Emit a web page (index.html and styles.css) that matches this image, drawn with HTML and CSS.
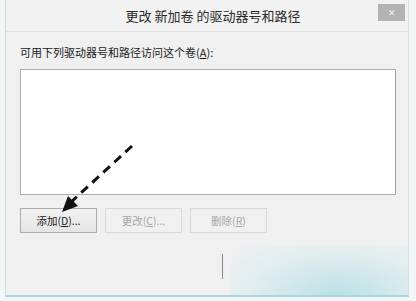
FILE: index.html
```html
<!DOCTYPE html>
<html lang="zh">
<head>
<meta charset="utf-8">
<link rel="stylesheet" href="styles.css">
</head>
<body>
<div class="window">
  <div class="titlebar">
    <div class="title">更改 新加卷 的驱动器号和路径</div>
    <div class="close">✕</div>
  </div>
  <div class="content">
    <div class="label">可用下列驱动器号和路径访问这个卷(<u>A</u>):</div>
    <div class="listbox"></div>
    <div class="buttons">
      <div class="btn">添加(<u>D</u>)...</div>
      <div class="btn disabled">更改(<u>C</u>)...</div>
      <div class="btn disabled">删除(<u>R</u>)</div>
    </div>
    <div class="lower">
      <div class="vline"></div>
    </div>
  </div>
  <svg class="arrow" width="90" height="90" viewBox="0 0 90 90">
    <line x1="76" y1="14" x2="14" y2="71" stroke="#111" stroke-width="3" stroke-dasharray="9 6"/>
    <polygon points="6,80 12,64 22,74" fill="#111"/>
  </svg>
  <div class="glow"></div>
</div>
</body>
</html>
```

FILE: styles.css
```css
html, body {
  margin: 0;
  padding: 0;
  width: 416px;
  height: 301px;
  overflow: hidden;
  background: #f3f6f6;
  font-family: "Noto Sans CJK SC", "Liberation Sans", sans-serif;
}
.window {
  position: relative;
  box-sizing: border-box;
  margin-left: 5px;
  width: 404px;
  height: 297px;
  background: #f0f0f0;
  border-left: 1px solid #cfdcdc;
  border-right: 1px solid #d6dede;
  border-bottom: 2px solid #a7d6de;
  display: flex;
  flex-direction: column;
}
.titlebar {
  height: 31px;
  background: #f2f2f2;
  border-bottom: 1px solid #dedede;
  display: flex;
  align-items: center;
  justify-content: center;
  position: relative;
}
.title {
  font-size: 13px;
  color: #2a2a2a;
  margin-left: 12px;
}
.close {
  position: absolute;
  right: 3px;
  top: 4px;
  width: 27px;
  height: 17px;
  background: #b3b3b3;
  color: #f4f4f4;
  font-size: 9px;
  display: flex;
  align-items: center;
  justify-content: center;
}
.content {
  flex: 1;
  padding: 11px 8px 0 14px;
  display: flex;
  flex-direction: column;
}
.label {
  font-size: 11px;
  color: #1a1a1a;
  height: 18px;
  line-height: 18px;
}
.label u, .btn u { text-decoration-thickness: 1px; }
.listbox {
  margin-top: 8px;
  width: 374px;
  height: 124px;
  background: #fff;
  border: 1px solid #adadad;
  border-right-color: #a0a0a0;
}
.buttons {
  margin-top: 13px;
  display: flex;
  gap: 8px;
}
.btn {
  box-sizing: border-box;
  width: 77px;
  height: 25px;
  border: 1px solid #acacac;
  background: linear-gradient(#f2f2f2, #e5e5e5);
  font-size: 10.5px;
  color: #222;
  display: flex;
  align-items: center;
  justify-content: center;
}
.btn.disabled {
  border-color: #d9d9d9;
  background: #f0f0f0;
  color: #a6a6a6;
}
.lower {
  flex: 1;
  position: relative;
}
.vline {
  margin-left: 202px;
  margin-top: 21px;
  width: 1px;
  height: 25px;
  background: #8a8a8a;
}
.arrow {
  position: absolute;
  left: 50px;
  top: 132px;
}
.glow {
  position: absolute;
  left: 225px;
  top: 245px;
  width: 178px;
  height: 50px;
  background: radial-gradient(ellipse at 60% 100%, rgba(170,220,228,0.75), rgba(200,232,236,0.35) 60%, rgba(240,240,240,0) 100%);
  pointer-events: none;
}
```
